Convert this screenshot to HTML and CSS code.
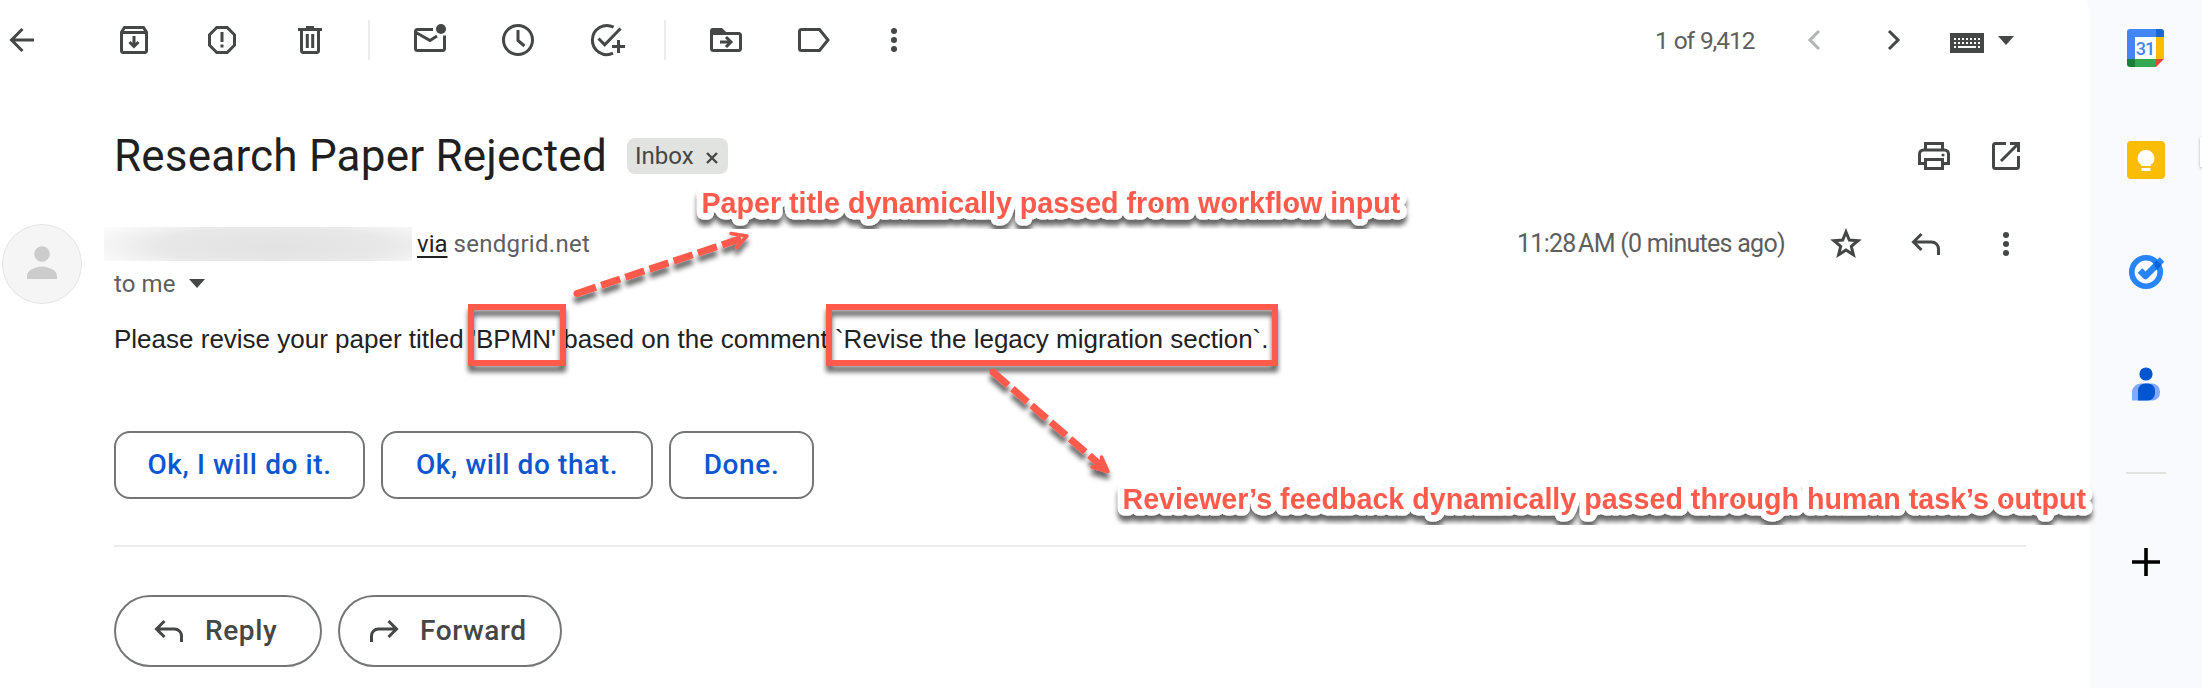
FILE: index.html
```html
<!DOCTYPE html>
<html lang="en">
<head>
<meta charset="utf-8">
<title>Research Paper Rejected</title>
<link rel="stylesheet" href="styles.css">
</head>
<body>
<div class="app">
  <main class="mail">
    <header class="toolbar">
      <svg class="ico back" viewBox="0 0 40 40"><path class="s" d="M32 20H10M20.500 9L9.500 20l11 11"/></svg>
      <div class="group">
        <svg class="ico" viewBox="0 0 40 40"><path class="s" d="M7.500 12.200v18.300a2 2 0 0 0 2 2h21a2 2 0 0 0 2-2V12.200l-3-4.700h-19zM7.500 12.500h25M20 16v10M15.500 22l4.500 4.500 4.500-4.500"/></svg>
        <svg class="ico" viewBox="0 0 40 40"><path class="s" d="M14.800 7.500h10.400l7.300 7.300v10.400l-7.300 7.300H14.800l-7.300-7.300V14.800zM20 12v10M20 24.500v3"/></svg>
        <svg class="ico" viewBox="0 0 40 40"><path class="s" d="M8 9.500h24M16 7.500h8M11.500 10v20.500a2 2 0 0 0 2 2h13a2 2 0 0 0 2-2V10M17.300 14v14M22.700 14v14"/></svg>
      </div>
      <i class="rule"></i>
      <div class="group">
        <svg class="ico" viewBox="0 0 40 40"><path class="s" d="M23 9.500H7.500a2 2 0 0 0-2 2v17a2 2 0 0 0 2 2h25a2 2 0 0 0 2-2V15.500M6 12.500l14 8 7-4.500"/><circle cx="31" cy="9" r="5"/></svg>
        <svg class="ico" viewBox="0 0 40 40"><circle class="s" cx="20" cy="20" r="14.500"/><path class="s" d="M20 10v10.500l6.500 5.500"/></svg>
        <svg class="ico" viewBox="0 0 40 40"><path class="s" d="M27.600 7.200A14.500 14.500 0 1 0 27 33.200M12.500 18.500l6.200 6.300L34.500 8.500M32.500 20v13M26 26.500h13"/></svg>
      </div>
      <i class="rule"></i>
      <div class="group">
        <svg class="ico" viewBox="0 0 40 40"><path d="M4 11a3 3 0 0 1 3-3h9l4 4v3H4z"/><path class="s" d="M5.500 13v15.500a2 2 0 0 0 2 2h25a2 2 0 0 0 2-2v-13a2 2 0 0 0-2-2H6M14 22h10M20 17l5 5-5 5"/></svg>
        <svg class="ico" viewBox="0 0 40 40"><path class="s" d="M7.500 9.500h18l8.500 10.500-8.500 10.500h-18a2 2 0 0 1-2-2v-17a2 2 0 0 1 2-2z"/></svg>
        <svg class="ico more" viewBox="0 0 40 40"><circle cx="20" cy="11" r="3"/><circle cx="20" cy="20" r="3"/><circle cx="20" cy="29" r="3"/></svg>
      </div>
      <div class="pager">
        <span class="count">1 of 9,412</span>
        <svg class="ico prev" viewBox="0 0 40 40"><path class="s" d="M25 11l-9 9 9 9"/></svg>
        <svg class="ico next" viewBox="0 0 40 40"><path class="s" d="M15 11l9 9-9 9"/></svg>
        <svg class="keyboard" viewBox="0 0 34 20"><path d="M0 0h34v20H0z"/><path class="keys" d="M4 6h26M4 10h26"/><path class="keys" d="M4 14h2M28 14h2"/><path class="bar" d="M8 14h18"/></svg>
        <i class="caret"></i>
      </div>
    </header>

    <section class="subject">
      <h1>Research Paper Rejected</h1>
      <span class="chip"><span>Inbox</span><svg viewBox="0 0 14 14"><path d="M2 2l10 10M12 2L2 12"/></svg></span>
      <div class="subject-actions">
        <svg class="ico" viewBox="0 0 40 40"><path class="s" d="M11.500 14V7.500h17V14M11.500 27.500h-6V18a4 4 0 0 1 4-4h21a4 4 0 0 1 4 4v9.500h-6M11.500 23.500h17v9h-17z"/><circle cx="29" cy="19" r="1.600"/></svg>
        <svg class="ico" viewBox="0 0 40 40"><path class="s" d="M20 7.500H9.500a2 2 0 0 0-2 2v21a2 2 0 0 0 2 2h21a2 2 0 0 0 2-2V20M24 7.500h8.500V16M32 8L15 25"/></svg>
      </div>
    </section>

    <section class="sender">
      <svg class="avatar" viewBox="0 0 80 80"><circle class="disc" cx="40" cy="40" r="39.500"/><circle cx="40" cy="30" r="7.800"/><path d="M25 55v-3c0-6 9-9.500 15-9.500S55 46 55 52v3z"/></svg>
      <div class="who">
        <div class="from"><span class="redacted"></span><span class="via">via</span><span class="domain">sendgrid.net</span></div>
        <div class="to"><span class="tome">to me</span><i class="caret"></i></div>
      </div>
      <div class="meta">
        <span class="time">11:28&#8239;AM (0 minutes ago)</span>
        <svg class="ico star" viewBox="0 0 40 40"><path class="s" d="M20 8l3.300 8.100 8.700.6-6.700 5.600 2.100 8.500L20 26.100l-7.400 4.700 2.100-8.500L8 16.700l8.700-.6z"/></svg>
        <svg class="ico" viewBox="0 0 40 40"><path class="s" d="M32.500 31v-6a7 7 0 0 0-7-7H8M15.500 10L7.500 18l8 8"/></svg>
        <svg class="ico" viewBox="0 0 40 40"><circle cx="20" cy="11" r="3"/><circle cx="20" cy="20" r="3"/><circle cx="20" cy="29" r="3"/></svg>
      </div>
    </section>

    <p class="message">Please revise your paper titled 'BPMN' based on the comment `Revise the legacy migration section`.</p>

    <div class="suggestions">
      <button class="suggest s1">Ok, I will do it.</button>
      <button class="suggest s2">Ok, will do that.</button>
      <button class="suggest s3">Done.</button>
    </div>

    <div class="actions">
      <button class="pill reply"><svg class="ico" viewBox="0 0 40 40"><path class="s" d="M32.500 31v-6a7 7 0 0 0-7-7H8M15.500 10L7.500 18l8 8"/></svg><span>Reply</span></button>
      <button class="pill forward"><svg class="ico" viewBox="0 0 40 40"><path class="s" d="M7.500 31v-6a7 7 0 0 1 7-7H32M24.500 10l8 8-8 8"/></svg><span>Forward</span></button>
    </div>
  </main>

  <aside class="side">
    <svg class="app-ico" viewBox="0 0 40 40"><path fill="#4285f4" d="M1 4a3 3 0 0 1 3-3h26v8H9v22H1z"/><path fill="#1967d2" d="M30 1h5a3 3 0 0 1 3 3v5h-8z"/><path fill="#fbbc04" d="M30 9h8v22h-8z"/><path fill="#34a853" d="M9 31h21v8H9z"/><path fill="#188038" d="M1 31h8v8H4a3 3 0 0 1-3-3z"/><path fill="#ea4335" d="M30 31h8l-8 8z"/><path fill="#fff" d="M9 9h21v22H9z"/><text class="day" x="19" y="26.500" text-anchor="middle">31</text></svg>
    <svg class="app-ico" viewBox="0 0 40 40"><rect x="1" y="1" width="38" height="38" rx="4" fill="#fbbc04"/><path fill="#fff" d="M20 10a8.200 8.200 0 0 0-5 14.800V26h10v-1.200A8.200 8.200 0 0 0 20 10zM15.500 28h9v3h-9z"/></svg>
    <svg class="app-ico" viewBox="0 0 40 40"><circle cx="20" cy="20" r="14.200" fill="none" stroke="#2684fc" stroke-width="5.600"/><path d="M14 18.500l5.500 5.500L36 7.500" fill="none" stroke="#2684fc" stroke-width="6.400" stroke-linejoin="round"/><path d="M27.500 11.500l3-3 5 4-4.500 6z" fill="#0066da"/></svg>
    <svg class="app-ico" viewBox="0 0 40 40"><circle cx="20" cy="10" r="6.600" fill="#0056d2"/><path fill="#83a9ff" d="M6 36.500v-8.500a9 9 0 0 1 9-8.500h11a8 8 0 0 1 8 8v1.500a7.500 7.500 0 0 1-7.500 7.500z"/><path fill="#0056d2" d="M12 36.500v-10a7 7 0 0 1 7-7h3a7 7 0 0 1 7 7v3a7 7 0 0 1-7 7z"/></svg>
    <i class="side-rule"></i>
    <svg class="app-ico plus" viewBox="0 0 40 40"><path d="M20 6v28M6 20h28"/></svg>
    <i class="tab"></i>
  </aside>

  <svg class="notes" viewBox="0 0 2202 688">
    <defs>
      <filter id="drop" x="-10%" y="-20%" width="120%" height="150%"><feDropShadow dx="0" dy="6" stdDeviation="2.500" flood-color="#000" flood-opacity=".6"/></filter>
    </defs>
    <g class="boxes" filter="url(#drop)"><rect x="471" y="307" width="92" height="56"/><rect x="829" y="307" width="446" height="56"/></g>
    <g class="arrows" filter="url(#drop)">
      <circle cx="577" cy="293.500" r="3.500"/><path class="dash" d="M577 293.500L744 237.500"/><path class="head" d="M731 233.500l16 2.500-10.500 11.500"/>
      <circle cx="993" cy="372" r="3.500"/><path class="dash" d="M993 372L1105 469"/><path class="head full" d="M1101.500 457l6.500 14.500-16-4.500 10-1z"/>
    </g>
    <g class="labels">
      <text x="701.500" y="213" filter="url(#drop)">Paper title dynamically passed from workflow input</text>
      <text x="1122.500" y="509" filter="url(#drop)">Reviewer’s feedback dynamically passed through human task’s output</text>
    </g>
  </svg>
</div>
</body>
</html>
```
FILE: styles.css
```css
* { box-sizing: border-box; }
body { margin: 0; background: #f8fafd; font-family: Roboto, "Liberation Sans", sans-serif; color: #1f1f1f; }
.app { position: relative; display: flex; width: 2202px; height: 688px; overflow: hidden; }
.mail { width: 2090px; height: 720px; margin-top: -16px; padding-top: 16px; background: #fff; border-radius: 0 32px 0 0; }
.side { flex: 1; position: relative; display: flex; flex-direction: column; align-items: center; padding-top: 28px; gap: 72px; }

.ico { width: 40px; height: 40px; flex: none; fill: #444746; display: block; }
.s { fill: none; stroke: #444746; stroke-width: 3; }
.caret { border: 8px solid transparent; border-top: 9px solid #444746; border-bottom: 0; }

.toolbar { display: flex; align-items: center; height: 80px; padding-left: 2px; }
.group { display: flex; gap: 48px; }
.back { margin-right: 72px; }
.rule { width: 2px; height: 40px; background: #ececec; margin: 0 40px 0 38px; }
.more { margin-left: -8px; }
.pager { display: flex; align-items: center; margin-left: auto; padding-right: 76px; }
.count { font-size: 24.5px; letter-spacing: -1.1px; word-spacing: 1px; color: #5e5e5e; width: 100px; white-space: nowrap; margin-right: 39px; }
.prev { opacity: .4; margin-right: 40px; }
.next { margin-right: 36px; }
.keyboard { width: 34px; height: 20px; margin: 5px 14px 0 0; fill: #444746; }
.keys { fill: none; stroke: #fff; stroke-width: 2; stroke-dasharray: 2 2; }
.bar { stroke: #fff; stroke-width: 2; }

.subject { display: flex; align-items: center; height: 80px; margin-top: 36px; padding: 0 64px 0 114px; }
h1 { margin: 0; font-size: 44px; line-height: 56px; font-weight: 400; letter-spacing: .2px; width: 513px; white-space: nowrap; }
.chip { display: flex; align-items: center; justify-content: space-between; width: 101px; height: 36px; padding: 0 9px 0 8px; border-radius: 8px; background: #e1e3e1; color: #444746; font-size: 24px; }
.chip svg { width: 14px; height: 14px; stroke: #444746; stroke-width: 2.4; margin-top: 4px; }
.subject-actions { display: flex; gap: 32px; margin-left: auto; }

.sender { display: flex; margin-top: 24px; padding-left: 2px; height: 88px; }
.avatar { width: 80px; height: 80px; margin-top: 4px; fill: #ccc; }
.disc { fill: #f5f5f5; stroke: #e4e4e4; }
.who { margin-left: 22px; width: 600px; font-size: 24px; color: #5e5e5e; }
.from { display: flex; align-items: center; height: 47px; white-space: nowrap; }
.redacted { width: 308px; height: 34px; margin-right: 5px; background: radial-gradient(ellipse 62% 90% at 55% 55%, #e2e2e2 0, #e8e8e8 60%, #fafafa 100%); }
.via { color: #1f1f1f; text-decoration: underline; text-underline-offset: 4px; margin-right: 6px; }
.domain { letter-spacing: .3px; }
.to { display: flex; align-items: center; padding-left: 10px; gap: 13px; height: 33px; letter-spacing: .1px; }
.meta { display: flex; align-items: flex-start; margin: 4px 64px 0 auto; }
.time { font-size: 25px; letter-spacing: -.72px; line-height: 40px; width: 268px; color: #5e5e5e; margin-right: 41px; white-space: nowrap; }
.star { margin-right: 40px; }
.meta .ico:nth-child(3) { margin-right: 40px; }

.message { margin: 12px 0 0 114px; font: 26px/38px "Liberation Sans", Arial, sans-serif; color: #222; white-space: nowrap; }

.suggestions { display: flex; gap: 16px; margin: 73px 64px 0 114px; padding-bottom: 46px; border-bottom: 2px solid #ececec; }
button { font-family: inherit; font-weight: 500; font-size: 28px; letter-spacing: .6px; background: #fff; border: 2px solid #747775; padding: 0; white-space: nowrap; }
.suggest { height: 68px; padding-bottom: 2px; border-radius: 16px; color: #0b57d0; }
.s1 { width: 251px; }
.s2 { width: 272px; }
.s3 { width: 145px; }
.actions { display: flex; gap: 16px; margin: 48px 0 0 114px; }
.pill { display: flex; align-items: center; height: 72px; border-radius: 36px; color: #444746; }
.pill span { padding-bottom: 2px; }
.reply { width: 208px; padding-left: 33px; }
.forward { width: 224px; padding-left: 24px; }
.pill .ico { margin-right: 16px; }

.app-ico { width: 40px; height: 40px; flex: none; display: block; }
.day { font: 500 18px Roboto, sans-serif; letter-spacing: -1px; fill: #4285f4; }
.side-rule { width: 40px; height: 2px; flex: none; background: #e1e3e1; margin: -4px 0 -4px; }
.plus { stroke: #000; stroke-width: 3.6; }
.tab { position: absolute; right: -2px; top: 137px; width: 4px; height: 30px; background: #fff; box-shadow: 0 1px 3px rgba(0,0,0,.3); }

.notes { position: absolute; inset: 0; width: 2202px; height: 688px; }
.boxes rect { fill: none; stroke: #ff5a4b; stroke-width: 6; }
.arrows circle { fill: #ff5a4b; }
.dash { fill: none; stroke: #ff5a4b; stroke-width: 7; stroke-dasharray: 20 5.5; }
.head { fill: none; stroke: #ff5a4b; stroke-width: 3.5; stroke-linejoin: round; stroke-linecap: round; }
.full { fill: #ff5a4b; }
.labels text { font: bold 28.65px "Liberation Sans", Arial, sans-serif; fill: #ff5a4b; stroke: #fff; stroke-width: 13px; stroke-linejoin: round; paint-order: stroke; }
```
